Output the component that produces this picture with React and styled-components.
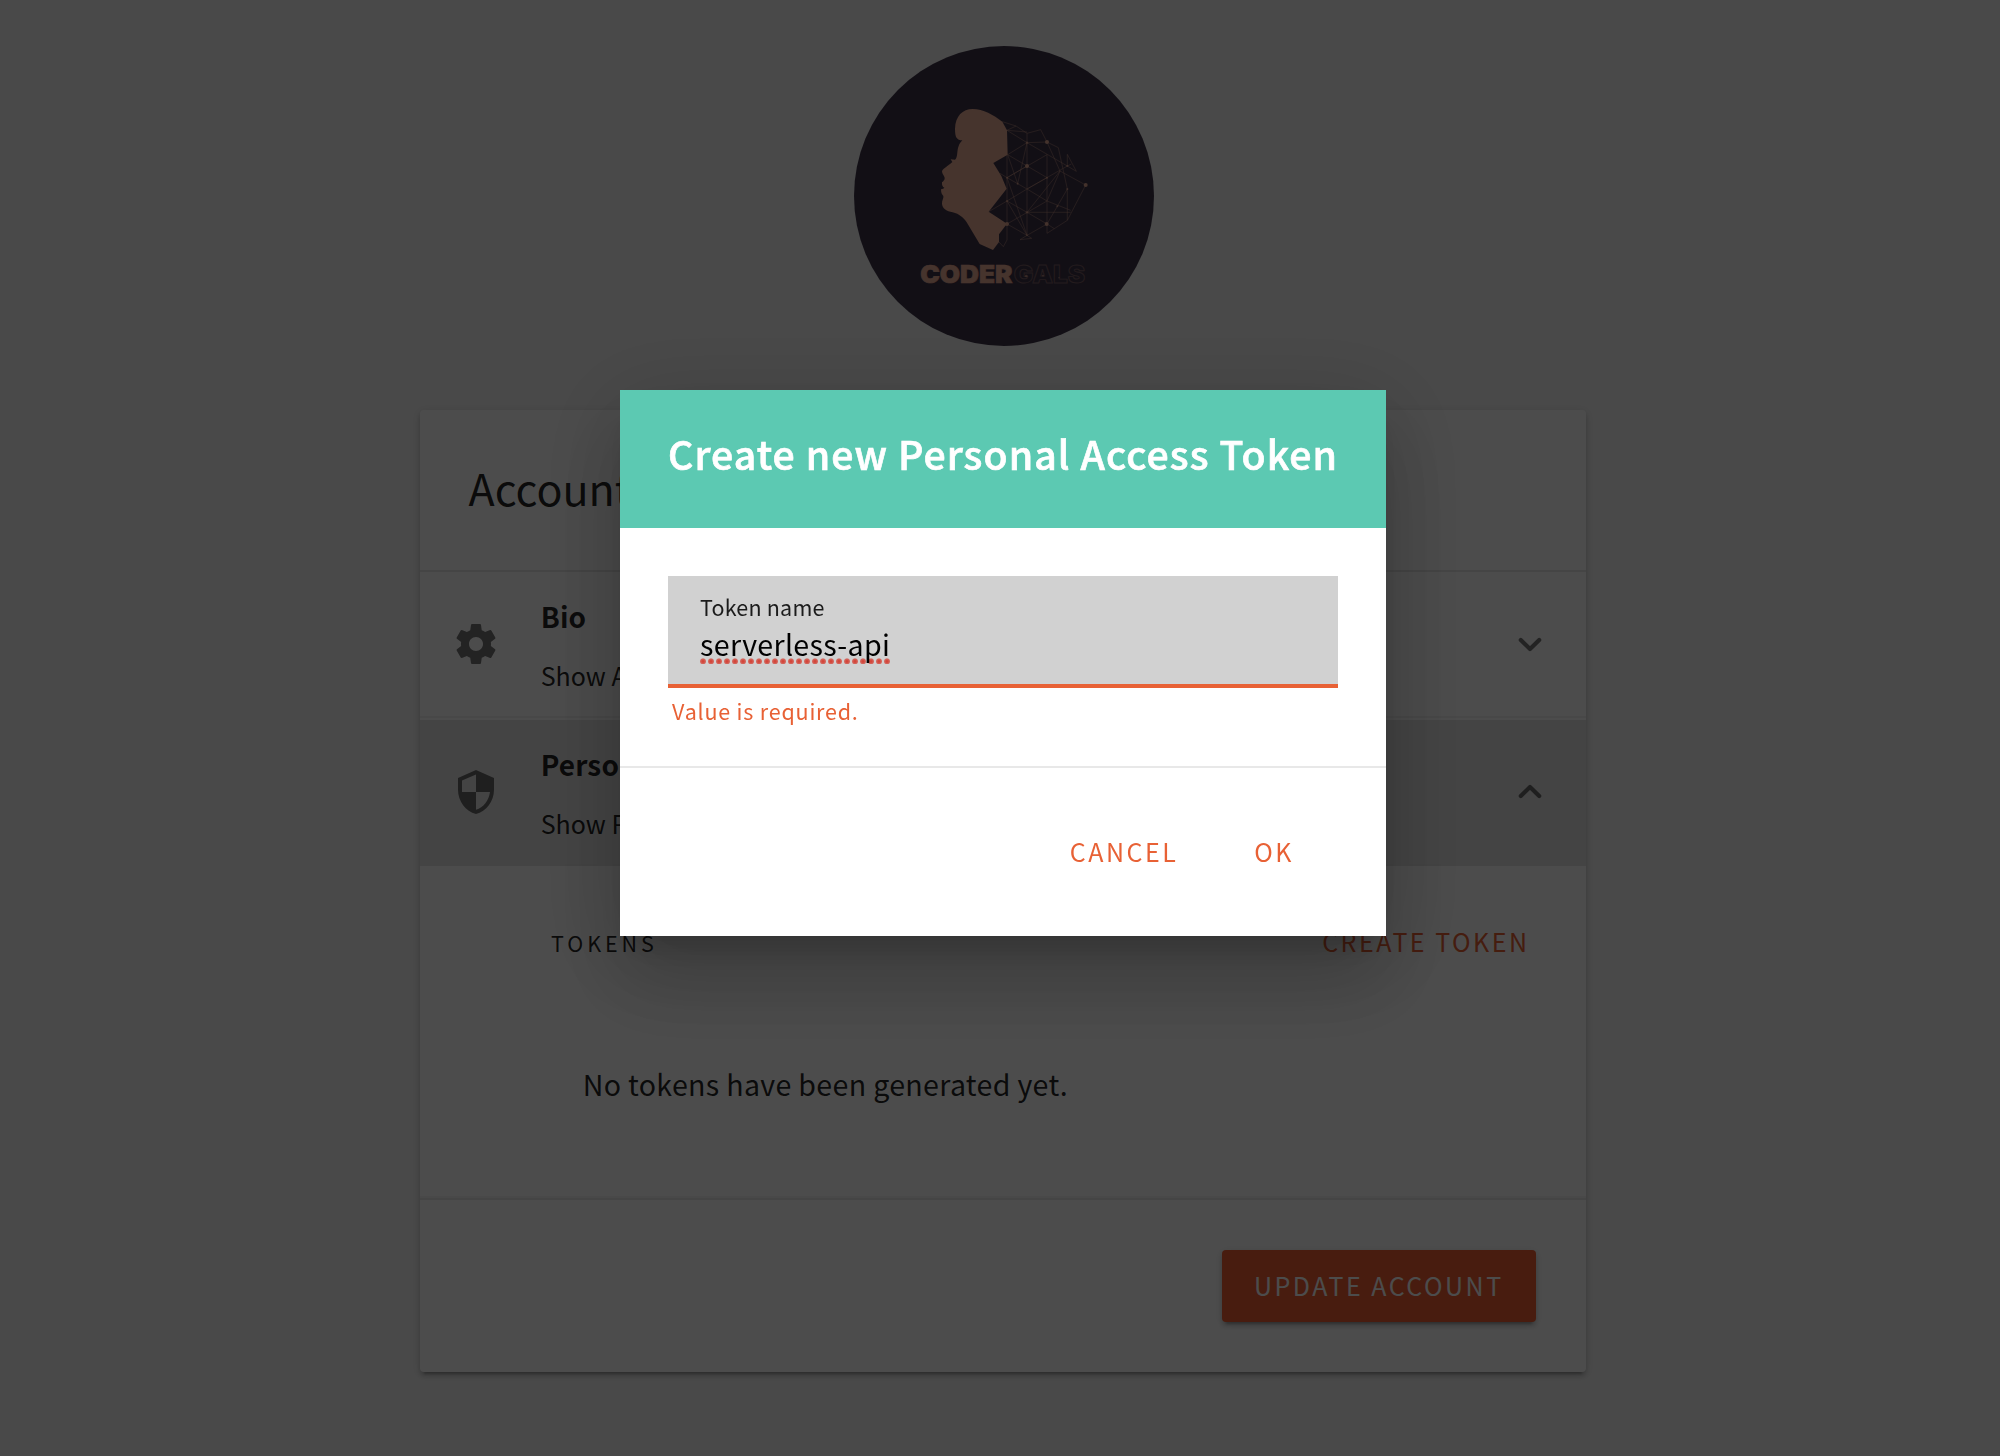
import React from 'react';
import styled, { createGlobalStyle, css } from 'styled-components';

const GlobalStyle = createGlobalStyle`
  * { box-sizing: border-box; }
  body {
    margin: 0;
    background: #f4f4f4;
    overflow: hidden;
    font-family: "Noto Sans CJK SC", "Noto Sans", sans-serif;
    color: rgba(0, 0, 0, 0.87);
  }
  h1, h2, h3, p { margin: 0; font-weight: 400; }
`;

const primary = '#e86135';

const Page = styled.main`
  width: 2000px;
  height: 1456px;
  display: flex;
  flex-direction: column;
  align-items: center;
  gap: 64px;
  padding: 46px 0 0 6px;
`;

const Avatar = styled.svg`
  width: 300px;
  height: 300px;
  margin-left: 2px;
  border-radius: 50%;
  background: #3f3549;
`;

const Card = styled.section`
  width: 1166px;
  height: 962px;
  display: flex;
  flex-direction: column;
  background: #fff;
  border-radius: 4px;
  box-shadow: 0 6px 2px -4px rgba(0, 0, 0, 0.2), 0 4px 4px rgba(0, 0, 0, 0.14), 0 2px 10px rgba(0, 0, 0, 0.12);
`;

const CardHeader = styled.header`
  height: 162px;
  padding: 46px 48.5px 0;
  border-bottom: 2px solid #e6e6e6;
`;

const CardTitle = styled.h1`
  font-size: 43px;
  line-height: 62px;
`;

const Row = styled.div`
  display: flex;
  align-items: center;
  height: 146px;
  padding: 0 32px;
  border-bottom: 2px solid ${(p) => (p.$open ? '#e3e3e3' : '#f1f1f1')};
  background: ${(p) => (p.$open ? '#e5e5e5' : '#fff')};
  margin-bottom: ${(p) => (p.$open ? 0 : '2px')};
`;

const RowIcon = styled.svg`
  width: 48px;
  height: 48px;
  flex: none;
  fill: rgba(0, 0, 0, 0.54);
`;

const Chevron = styled.svg`
  width: 48px;
  height: 48px;
  flex: none;
  fill: none;
  stroke: rgba(0, 0, 0, 0.54);
  stroke-width: 4.2;
  stroke-linecap: round;
  stroke-linejoin: round;
  transform: ${(p) => (p.$open ? 'rotate(180deg)' : 'none')};
`;

const RowText = styled.div`
  flex: 1;
  align-self: stretch;
  display: flex;
  flex-direction: column;
  gap: 21px;
  padding: 24px 0 0 40.7px;
`;

const RowTitle = styled.h2`
  font-size: 28px;
  line-height: 40px;
  font-weight: 700;
  letter-spacing: 0.15px;
`;

const RowHint = styled.p`
  font-size: 25px;
  line-height: 36px;
`;

const TokenPanel = styled.div`
  height: 332px;
  padding: 57px 56.5px 0 131px;
  border-bottom: 2px solid #f5f5f5;
`;

const TokenBar = styled.div`
  display: flex;
  justify-content: space-between;
  align-items: flex-start;
`;

const Overline = styled.h3`
  margin-top: 4px;
  font-size: 21.5px;
  line-height: 31px;
  letter-spacing: 3.95px;
`;

const Empty = styled.p`
  margin: 104px 0 0 31.7px;
  font-size: 28.6px;
  line-height: 41px;
  letter-spacing: 0.32px;
`;

const CardFooter = styled.footer`
  flex: 1;
  display: flex;
  justify-content: flex-end;
  align-items: flex-start;
  padding: 50px 50px 0;
  border-top: 2px solid #e8e8e8;
`;

const buttonText = css`
  border: 0;
  font-family: inherit;
  font-size: 25px;
  line-height: 36px;
  letter-spacing: 2.5px;
  text-transform: uppercase;
  white-space: nowrap;
`;

const TextButton = styled.button`
  ${buttonText}
  padding: 0 ${(p) => p.$pad || 0}px;
  background: none;
  color: ${primary};
`;

const RaisedButton = styled.button`
  ${buttonText}
  width: 314px;
  padding: 17px 0 19px 32px;
  text-align: left;
  border-radius: 4px;
  background: #f15e32;
  color: #fff;
  box-shadow: 0 6px 2px -4px rgba(0, 0, 0, 0.2), 0 4px 4px rgba(0, 0, 0, 0.14), 0 2px 10px rgba(0, 0, 0, 0.12);
`;

const Backdrop = styled.div`
  position: fixed;
  inset: 0;
  display: flex;
  justify-content: center;
  align-items: flex-start;
  padding: 390px 0 0 6px;
  background: rgba(0, 0, 0, 0.7);
`;

const Dialog = styled.div`
  width: 766px;
  height: 546px;
  display: flex;
  flex-direction: column;
  background: #fff;
  box-shadow: 0 22px 30px -14px rgba(0, 0, 0, 0.2), 0 48px 76px 6px rgba(0, 0, 0, 0.14), 0 18px 92px 16px rgba(0, 0, 0, 0.12);
`;

const DialogHeader = styled.header`
  height: 138px;
  padding: 35px 48px 0;
  background: #5cc9b2;
`;

const DialogTitle = styled.h2`
  color: #fff;
  font-size: 39.2px;
  line-height: 56px;
  font-weight: 500;
  letter-spacing: 1.08px;
  -webkit-text-stroke: 0.7px #fff;
  white-space: nowrap;
`;

const DialogBody = styled.div`
  height: 240px;
  padding: 48px 48px 0;
  border-bottom: 2px solid #e8e8e8;
`;

const Field = styled.div`
  display: flex;
  flex-direction: column;
  align-items: flex-start;
  gap: 1px;
  height: 112px;
  padding: 15px 32px 0;
  background: #d1d1d1;
  border-bottom: 4px solid ${primary};
`;

const Label = styled.label`
  font-size: 21.5px;
  line-height: 31px;
  letter-spacing: 0.2px;
`;

const Value = styled.span`
  color: #000;
  font-size: 28.6px;
  line-height: 41px;
  letter-spacing: 0.34px;
  background: radial-gradient(circle at 3px 3.4px, #d4453a 0.8px, #d2685f 2.5px, rgba(210, 104, 95, 0) 3.5px) 0 35px / 8px 6px repeat-x;
`;

const ErrorText = styled.p`
  margin: 7px 0 0 4px;
  color: ${primary};
  font-size: 21.5px;
  line-height: 31px;
  letter-spacing: 0.8px;
`;

const DialogActions = styled.footer`
  display: flex;
  justify-content: flex-end;
  gap: 12px;
  padding: 65px 60px 0;
`;

const Word = styled.text`
  font-family: Inter, sans-serif;
  font-weight: 900;
  font-size: 73px;
`;

const EDGES =
  'M487 275L528 288L561 310L602 299L621 336L655 353L682 477V571L621 610V374 ' +
  'M528 288L501 301L561 338L621 336L660 423L737 465L682 571 M501 301L561 306 ' +
  'M561 310V616M501 374V630L490 650L477 636 ' +
  'M503 374L561 338L682 408L709 424L682 373V408L561 477L501 443L621 374 ' +
  'M503 374L621 443L561 477L621 513 M501 443L561 408 ' +
  'M561 338L533 461L503 374 M480 430L501 443 ' +
  'M446 545L501 513L561 477 M501 513L561 547L692 547 M621 513L501 582L561 616L621 582L561 547 ' +
  'M501 443L561 616L501 513 M561 616L540 629L575 625L561 616 ' +
  'M561 547L660 423L621 513L692 541 M621 582L643 596 ' +
  'M682 477L652 529L621 582 M694 402L682 408';

const NODES = [
  [621, 336, 6], [561, 408, 6], [737, 465, 6], [501, 582, 6], [620, 582, 6],
  [561, 338, 3.5], [501, 443, 3], [533, 461, 3], [621, 443, 3], [682, 408, 3],
  [682, 477, 3], [501, 513, 3], [561, 547, 3.5], [652, 529, 3], [561, 616, 2.5],
  [559, 738, 4], [609, 737, 2.5], [657, 743, 2],
];

function Logo() {
  return (
    <Avatar viewBox="42 48 900 900" aria-label="CoderGals">
      <path
        fill="#e9ad96"
        d="M398 237C430 237 460 255 487 275L501 301L503 374L460 399L484 438L500 476L446 545L501 581L477 613V636L459 660L419 642L380 577C371 563 358 552 338 547C320 543 308 537 306 522C305 512 312 504 310 498C306 494 303 489 303 478C307 476 312 476 313 473C308 471 305 466 306 457C310 453 315 449 314 443C312 436 306 431 306 424C308 416 324 408 337 396L332 388L345 389C354 383 350 362 356 348C358 341 363 336 367 331C350 330 345 322 345 296C346 258 368 237 398 237Z"
      />
      <path d={EDGES} fill="none" stroke="#e9ad96" strokeOpacity="0.44" strokeWidth="2.6" />
      {NODES.map(([x, y, r]) => (
        <circle key={`${x}-${y}`} cx={x} cy={y} r={r} fill="#e9ad96" fillOpacity={r > 5 ? 0.95 : 0.65} />
      ))}
      <Word x="241" y="758" textLength="276" lengthAdjust="spacingAndGlyphs" fill="#e9ad96" stroke="#e9ad96" strokeWidth="2">CODER</Word>
      <Word x="521" y="758" textLength="214" lengthAdjust="spacingAndGlyphs" fill="none" stroke="#e9ad96" strokeOpacity="0.34" strokeWidth="2.8">GALS</Word>
    </Avatar>
  );
}

const GEAR =
  'M19.43 12.98c.04-.32.07-.64.07-.98s-.03-.66-.07-.98l2.11-1.65c.19-.15.24-.42.12-.64l-2-3.46c-.12-.22-.39-.3-.61-.22l-2.49 1c-.52-.4-1.08-.73-1.69-.98l-.38-2.65C14.46 2.18 14.25 2 14 2h-4c-.25 0-.46.18-.49.42l-.38 2.65c-.61.25-1.17.59-1.69.98l-2.49-1c-.23-.09-.49 0-.61.22l-2 3.46c-.13.22-.07.49.12.64l2.11 1.65c-.04.32-.07.65-.07.98s.03.66.07.98l-2.11 1.65c-.19.15-.24.42-.12.64l2 3.46c.12.22.39.3.61.22l2.49-1c.52.4 1.08.73 1.69.98l.38 2.65c.03.24.24.42.49.42h4c.25 0 .46-.18.49-.42l.38-2.65c.61-.25 1.17-.59 1.69-.98l2.49 1c.23.09.49 0 .61-.22l2-3.46c.12-.22.07-.49-.12-.64l-2.11-1.65zM12 15.5c-1.93 0-3.5-1.57-3.5-3.5s1.57-3.5 3.5-3.5 3.5 1.57 3.5 3.5-1.57 3.5-3.5 3.5z';
const SHIELD =
  'M12 1L3 5v6c0 5.55 3.84 10.74 9 12 5.16-1.26 9-6.45 9-12V5l-9-4zm0 10.99h7c-.53 4.12-3.28 7.79-7 8.94V12H5V6.3l7-3.11v8.8z';

function SettingsRow({ icon, title, hint, open }) {
  return (
    <Row $open={open}>
      <RowIcon viewBox="0 0 24 24"><path d={icon} /></RowIcon>
      <RowText>
        <RowTitle>{title}</RowTitle>
        <RowHint>{hint}</RowHint>
      </RowText>
      <Chevron viewBox="0 0 48 48" $open={open}><path d="M14.8 20L24 29L33.2 20" /></Chevron>
    </Row>
  );
}

export default function App() {
  return (
    <>
      <GlobalStyle />
      <Page>
        <Logo />
        <Card>
          <CardHeader><CardTitle>Account</CardTitle></CardHeader>
          <SettingsRow icon={GEAR} title="Bio" hint="Show A" />
          <SettingsRow icon={SHIELD} title="Perso" hint="Show P" open />
          <TokenPanel>
            <TokenBar>
              <Overline>TOKENS</Overline>
              <TextButton>Create token</TextButton>
            </TokenBar>
            <Empty>No tokens have been generated yet.</Empty>
          </TokenPanel>
          <CardFooter><RaisedButton>Update account</RaisedButton></CardFooter>
        </Card>
      </Page>
      <Backdrop>
        <Dialog role="dialog">
          <DialogHeader><DialogTitle>Create new Personal Access Token</DialogTitle></DialogHeader>
          <DialogBody>
            <Field>
              <Label>Token name</Label>
              <Value>serverless-api</Value>
            </Field>
            <ErrorText>Value is required.</ErrorText>
          </DialogBody>
          <DialogActions>
            <TextButton $pad={32}>Cancel</TextButton>
            <TextButton $pad={32}>OK</TextButton>
          </DialogActions>
        </Dialog>
      </Backdrop>
    </>
  );
}
